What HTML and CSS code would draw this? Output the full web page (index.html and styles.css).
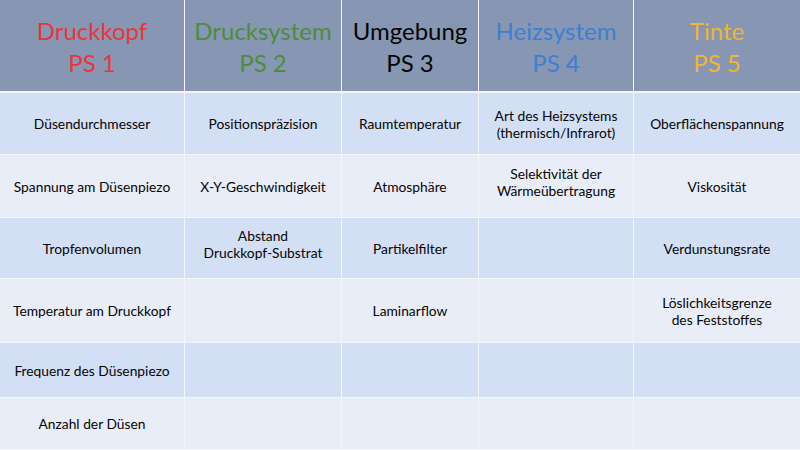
FILE: index.html
```html
<!DOCTYPE html>
<html lang="de">
<head>
<meta charset="utf-8">
<title>Parametersysteme</title>
<link rel="stylesheet" href="styles.css">
</head>
<body>
<div class="table">
  <div class="head c-red">Druckkopf<br>PS 1</div>
  <div class="head c-green">Drucksystem<br>PS 2</div>
  <div class="head c-black">Umgebung<br>PS 3</div>
  <div class="head c-blue">Heizsystem<br>PS 4</div>
  <div class="head c-gold">Tinte<br>PS 5</div>

  <div class="cell dark">Düsendurchmesser</div>
  <div class="cell dark">Positionspräzision</div>
  <div class="cell dark">Raumtemperatur</div>
  <div class="cell dark">Art des Heizsystems<br>(thermisch/Infrarot)</div>
  <div class="cell dark">Oberflächenspannung</div>

  <div class="cell light">Spannung am Düsenpiezo</div>
  <div class="cell light">X-Y-Geschwindigkeit</div>
  <div class="cell light">Atmosphäre</div>
  <div class="cell light up">Selektivität der<br>Wärmeübertragung</div>
  <div class="cell light">Viskosität</div>

  <div class="cell dark">Tropfenvolumen</div>
  <div class="cell dark up">Abstand<br>Druckkopf-Substrat</div>
  <div class="cell dark">Partikelfilter</div>
  <div class="cell dark"></div>
  <div class="cell dark">Verdunstungsrate</div>

  <div class="cell light">Temperatur am Druckkopf</div>
  <div class="cell light"></div>
  <div class="cell light">Laminarflow</div>
  <div class="cell light"></div>
  <div class="cell light">Löslichkeitsgrenze<br>des Feststoffes</div>

  <div class="cell dark">Frequenz des Düsenpiezo</div>
  <div class="cell dark"></div>
  <div class="cell dark"></div>
  <div class="cell dark"></div>
  <div class="cell dark"></div>

  <div class="cell light">Anzahl der Düsen</div>
  <div class="cell light"></div>
  <div class="cell light"></div>
  <div class="cell light"></div>
  <div class="cell light"></div>
</div>
</body>
</html>
```
FILE: styles.css
```css
html, body {
  margin: 0;
  padding: 0;
  width: 800px;
  height: 450px;
  overflow: hidden;
  background: #ffffff;
}
.table {
  display: grid;
  grid-template-columns: 184px 156px 136px 154px 166px;
  grid-template-rows: 92px 61px 62px 60px 63px 54px 51px;
  column-gap: 1px;
  row-gap: 1px;
  background: #f4f6fb;
  width: 800px;
  height: 450px;
  font-family: Lato, "Open Sans", sans-serif;
}
.head {
  background: #8797b3;
  display: flex;
  align-items: center;
  justify-content: center;
  text-align: center;
  font-size: 24px;
  line-height: 32px;
  padding-top: 2px;
  margin-bottom: 1px;
}
.c-red { color: #e8353a; }
.c-green { color: #4f8b3b; }
.c-black { color: #050505; }
.c-blue { color: #3d7fd0; }
.c-gold { color: #f2b431; }
.cell {
  display: flex;
  align-items: center;
  justify-content: center;
  text-align: center;
  font-size: 13.8px;
  line-height: 17px;
  color: #050505;
}
.up { padding-bottom: 8px; }
.dark { background: #d3dff4; }
.light { background: #e9edf8; }
```
